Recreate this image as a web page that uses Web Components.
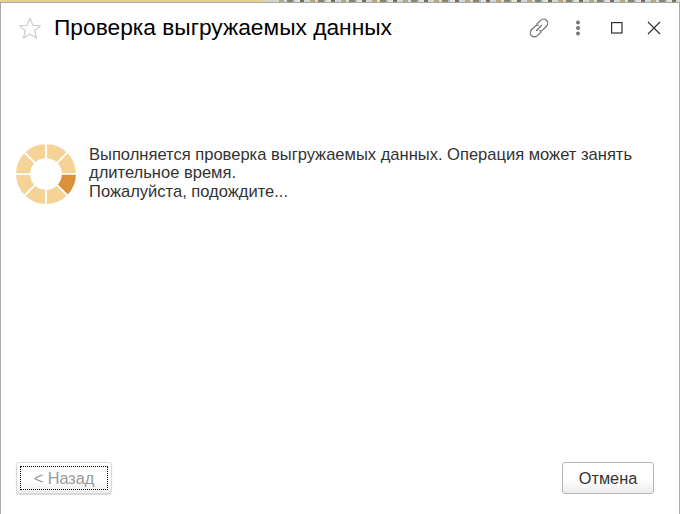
<!DOCTYPE html>
<html lang="ru">
<head>
<meta charset="utf-8">
<title>Проверка выгружаемых данных</title>
<style>
  html, body { margin: 0; height: 100%; background: #fff; }
  body { font-family: "Liberation Sans", Arial, sans-serif; overflow: hidden; }
</style>
</head>
<body>

<check-window>
  <span slot="title">Проверка выгружаемых данных</span>
  <wait-message>
    Выполняется проверка выгружаемых данных. Операция может занять длительное время.<br>
    Пожалуйста, подождите...
  </wait-message>
  <ui-button slot="back" disabled>&lt; Назад</ui-button>
  <ui-button slot="cancel">Отмена</ui-button>
</check-window>

<script>
/* strip of the window lying behind the dialog, only 2px of it is visible */
class BackStrip extends HTMLElement {
  constructor() {
    super();
    const shadow = this.attachShadow({ mode: "open" });
    shadow.innerHTML = `
    <style>
      :host { display: flex; height: 2px; flex: none; }
      .yellow { width: 263px; background: #e6d08c; }
      .gray { width: 16px; background: #d4d4d4; }
      .noise {
        flex: 1;
        background: repeating-linear-gradient(90deg,
          #b9a777 0 5px, #d8dde0 5px 8px, #8b8468 8px 14px, #9fc0d8 14px 16px,
          #e8e4d8 16px 21px, #77705a 21px 25px, #cfd8de 25px 31px);
      }
    </style>
    <div class="yellow"></div><div class="gray"></div><div class="noise"></div>
  `;
  }
}

class CheckWindow extends HTMLElement {
  constructor() {
    super();
    const shadow = this.attachShadow({ mode: "open" });
    shadow.innerHTML = `
    <style>
      :host {
        display: flex;
        flex-direction: column;
        width: 680px;
        height: 514px;
        box-sizing: border-box;
        background: #fff;
        overflow: hidden;
      }
      .frame {
        flex: 1;
        display: flex;
        flex-direction: column;
        min-height: 0;
        border-top: 1px solid #a9a9a9;
        border-left: 1px solid #a9a9a9;
        border-right: 1px solid #a9a9a9;
      }
      header {
        display: flex;
        align-items: center;
        height: 50px;
        flex: none;
        padding-left: 16px;
      }
      .star { width: 26px; height: 26px; flex: none; margin-right: 11px; }
      .title { flex: 1; font-size: 22.75px; color: #000; white-space: nowrap; padding-bottom: 2px; }
      .tools { display: flex; align-items: center; }
      .tools svg { display: block; flex: none; }
      .content { flex: 1; min-height: 0; padding: 91px 14px 0 15px; }
      footer {
        display: flex;
        justify-content: space-between;
        padding: 0 25px 20px 15px;
        flex: none;
      }
    </style>
    <back-strip></back-strip>
    <div class="frame">
      <header>
        <svg class="star" viewBox="0 0 26 26">
          <path d="M13 3.2l2.9 7 7.5.6-5.7 4.9 1.8 7.3L13 19.1l-6.5 3.9 1.8-7.3-5.7-4.9 7.5-.6z"
            fill="#fff" stroke="#c8c8c8" stroke-width="1.1" stroke-linejoin="round"/>
        </svg>
        <div class="title"><slot name="title"></slot></div>
        <div class="tools">
          <svg width="22" height="22" viewBox="0 0 22 22" fill="none" stroke="#6e6e6e" stroke-width="1.2" stroke-linecap="round">
            <path d="M8.8 7.2l3.8-3.8a4 4 0 0 1 6 5.6l-3.8 3.9a4 4 0 0 1-3 1"/>
            <path d="M13.2 14.8l-3.8 3.8a4 4 0 0 1-6-5.6l3.8-3.9a4 4 0 0 1 3-1"/>
            <path d="M8.5 13.5l5-5"/>
          </svg>
          <svg style="margin-left:25px" width="6" height="16" viewBox="0 0 6 16" fill="#777">
            <circle cx="3" cy="2.5" r="2"/><circle cx="3" cy="8" r="2"/><circle cx="3" cy="13.5" r="2"/>
          </svg>
          <svg style="margin-left:30px" width="12" height="12" viewBox="0 0 12 12" fill="none" stroke="#333" stroke-width="1.2">
            <rect x=".6" y=".6" width="10.4" height="10.4"/>
          </svg>
          <svg style="margin-left:24px;margin-right:18px" width="14" height="14" viewBox="0 0 14 14" fill="none" stroke="#333" stroke-width="1.2">
            <path d="M1 1l12 12M13 1L1 13"/>
          </svg>
        </div>
      </header>
      <div class="content"><slot></slot></div>
      <footer>
        <slot name="back"></slot>
        <slot name="cancel"></slot>
      </footer>
    </div>
  `;
  }
}

class WaitMessage extends HTMLElement {
  constructor() {
    super();
    const shadow = this.attachShadow({ mode: "open" });
    // 8 sectors of the ring, the one just below 3 o'clock is the active one
    let sectors = "";
    for (let i = 0; i < 8; i++) {
      const active = i === 2;
      sectors += `<path transform="rotate(${i * 45} 30 30)" d="${WaitMessage.sector()}" fill="${active ? "#dd9038" : "#f5d397"}" stroke="#fff" stroke-width="1.7"/>`;
    }
    shadow.innerHTML = `
    <style>
      :host { display: flex; align-items: flex-start; gap: 13px; }
      svg { width: 60px; height: 60px; flex: none; }
      .text { font-size: 16.55px; line-height: 18.4px; color: #333; width: 560px; padding-top: 2px; }
    </style>
    <svg viewBox="0 0 60 60">${sectors}</svg>
    <div class="text"><slot></slot></div>
  `;
  }

  // one ring sector from 12 o'clock clockwise, the white stroke makes the gap
  static sector() {
    const point = (r, deg) => {
      const a = (deg - 90) * Math.PI / 180;
      return (30 + r * Math.cos(a)).toFixed(2) + " " + (30 + r * Math.sin(a)).toFixed(2);
    };
    const outer = 30.8, inner = 15;
    return `M${point(outer, 0)}A${outer} ${outer} 0 0 1 ${point(outer, 45)}L${point(inner, 45)}A${inner} ${inner} 0 0 0 ${point(inner, 0)}Z`;
  }
}

class UiButton extends HTMLElement {
  constructor() {
    super();
    const shadow = this.attachShadow({ mode: "open" });
    shadow.innerHTML = `
    <style>
      :host {
        display: block;
        box-sizing: border-box;
        width: 92px;
        height: 32px;
        font-size: 16.3px;
        color: #333;
        border: 1px solid #b4b4b4;
        border-radius: 3px;
        background: linear-gradient(#fff 0%, #fff 55%, #ececec 100%);
      }
      :host([disabled]) {
        width: 96px;
        color: #999;
        border-color: #d9d9d9;
        box-shadow: 0 1px 1px #d4d4d4;
        padding: 3px;
      }
      .face {
        display: flex;
        align-items: center;
        justify-content: center;
        height: 100%;
        box-sizing: border-box;
      }
      :host([disabled]) .face { border: 1px dotted #000; }
    </style>
    <div class="face"><slot></slot></div>
  `;
  }
}

customElements.define("back-strip", BackStrip);
customElements.define("check-window", CheckWindow);
customElements.define("wait-message", WaitMessage);
customElements.define("ui-button", UiButton);
</script>
</body>
</html>
